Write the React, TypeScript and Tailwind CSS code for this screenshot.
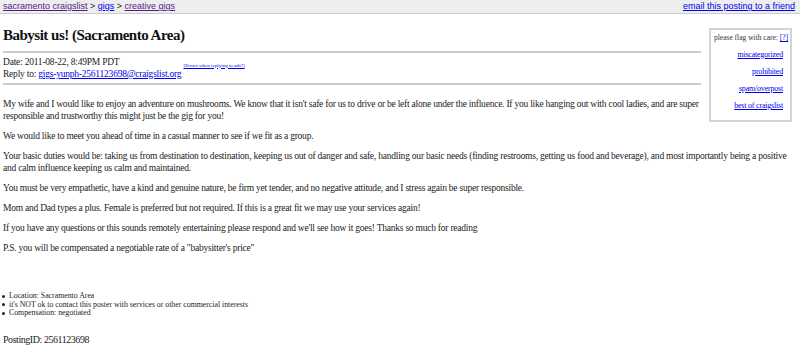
import React from "react";

const serif = { fontFamily: '"Liberation Serif", "Times New Roman", serif' };

export default function App() {
  return (
    <div className="w-[800px] h-[353px] overflow-hidden bg-white text-[#222]" style={serif}>
      <div
        className="h-[14px] bg-[#eeeeee] border-b border-[#cccccc] flex items-center justify-between px-[3px] text-[9px] leading-[13px]"
        style={{ fontFamily: '"Liberation Sans", Arial, sans-serif' }}
      >
        <div className="whitespace-nowrap">
          <a className="text-[#551a8b] underline">sacramento craigslist</a>
          <span className="text-[#222]"> &gt; </span>
          <a className="text-[#0000ee] underline">gigs</a>
          <span className="text-[#222]"> &gt; </span>
          <a className="text-[#551a8b] underline">creative gigs</a>
        </div>
        <a className="text-[#0000ee] underline pr-[2px]">email this posting to a friend</a>
      </div>

      <div className="flow-root pl-[3px] pr-[2px]">
        <div className="float-right w-[83px] h-[94px] mt-[14px] ml-[8px] mr-[6px] border-2 border-[#d4d4d4] text-[7.5px] leading-[10px] pt-[3px] pr-[7px] pl-[3px]">
          <div className="whitespace-nowrap text-[#333]">
            please flag with care: <a className="text-[#0000ee] underline">[?]</a>
          </div>
          <div className="flex flex-col items-end gap-[7px] mt-[7px] text-[8px] tracking-[-0.2px]">
            <a className="text-[#0000ee] underline">miscategorized</a>
            <a className="text-[#0000ee] underline">prohibited</a>
            <a className="text-[#0000ee] underline">spam/overpost</a>
            <a className="text-[#0000ee] underline">best of craigslist</a>
          </div>
        </div>

        <h2 className="font-bold text-[15px] tracking-[-0.5px] leading-[20px] mt-[11px] text-[#111]">Babysit us! (Sacramento Area)</h2>
        <div className="overflow-hidden h-[2px] bg-[#cccccc] mt-[6px] -ml-[3px]" />
        <div className="text-[9.5px] tracking-[-0.22px] leading-[12px] mt-[3px]">
          <div>Date: 2011-08-22, 8:49PM PDT</div>
          <div>
            Reply to: <a className="text-[#0000ee] underline">gigs-yunph-2561123698@craigslist.org</a>{" "}
            <sup className="text-[5px] tracking-normal text-[#0000ee] underline align-top">[Errors when replying to ads?]</sup>
          </div>
        </div>
        <div className="overflow-hidden h-[2px] bg-[#cccccc] mt-[3px] -ml-[3px]" />

        <div className="text-[9.5px] tracking-[-0.23px] leading-[12px] mt-[13px] flex flex-col gap-[8px]">
          <p>
            My wife and I would like to enjoy an adventure on mushrooms. We know that it isn't safe for us to drive or be left alone under the influence. If you like hanging out with cool ladies, and are super responsible and trustworthy this might just be the gig for you!
          </p>
          <p>We would like to meet you ahead of time in a casual manner to see if we fit as a group.</p>
          <p>
            <span className="whitespace-nowrap tracking-[-0.22px]">
              Your basic duties would be: taking us from destination to destination, keeping us out of danger and safe, handling our basic needs (finding restrooms, getting us food and beverage), and most importantly being a positive
            </span>
            <br />
            and calm influence keeping us calm and maintained.
          </p>
          <p>
            You must be very empathetic, have a kind and genuine nature, be firm yet tender, and no negative attitude, and I stress again be super responsible.
          </p>
          <p>Mom and Dad types a plus. Female is preferred but not required. If this is a great fit we may use your services again!</p>
          <p>If you have any questions or this sounds remotely entertaining please respond and we'll see how it goes! Thanks so much for reading</p>
          <p>P.S. you will be compensated a negotiable rate of a "babysitter's price"</p>
        </div>

        <ul className="mt-[38px] text-[7.8px] leading-[8.5px] -ml-[1px]">
          <li className="flex items-center gap-[4px]"><span className="w-[3px] h-[3px] rounded-full bg-[#222] inline-block" />Location: Sacramento Area</li>
          <li className="flex items-center gap-[4px]"><span className="w-[3px] h-[3px] rounded-full bg-[#222] inline-block" />it's NOT ok to contact this poster with services or other commercial interests</li>
          <li className="flex items-center gap-[4px]"><span className="w-[3px] h-[3px] rounded-full bg-[#222] inline-block" />Compensation: negotiated</li>
        </ul>

        <div className="text-[10px] tracking-[-0.45px] leading-[12px] mt-[16px]">PostingID: 2561123698</div>
      </div>
    </div>
  );
}
